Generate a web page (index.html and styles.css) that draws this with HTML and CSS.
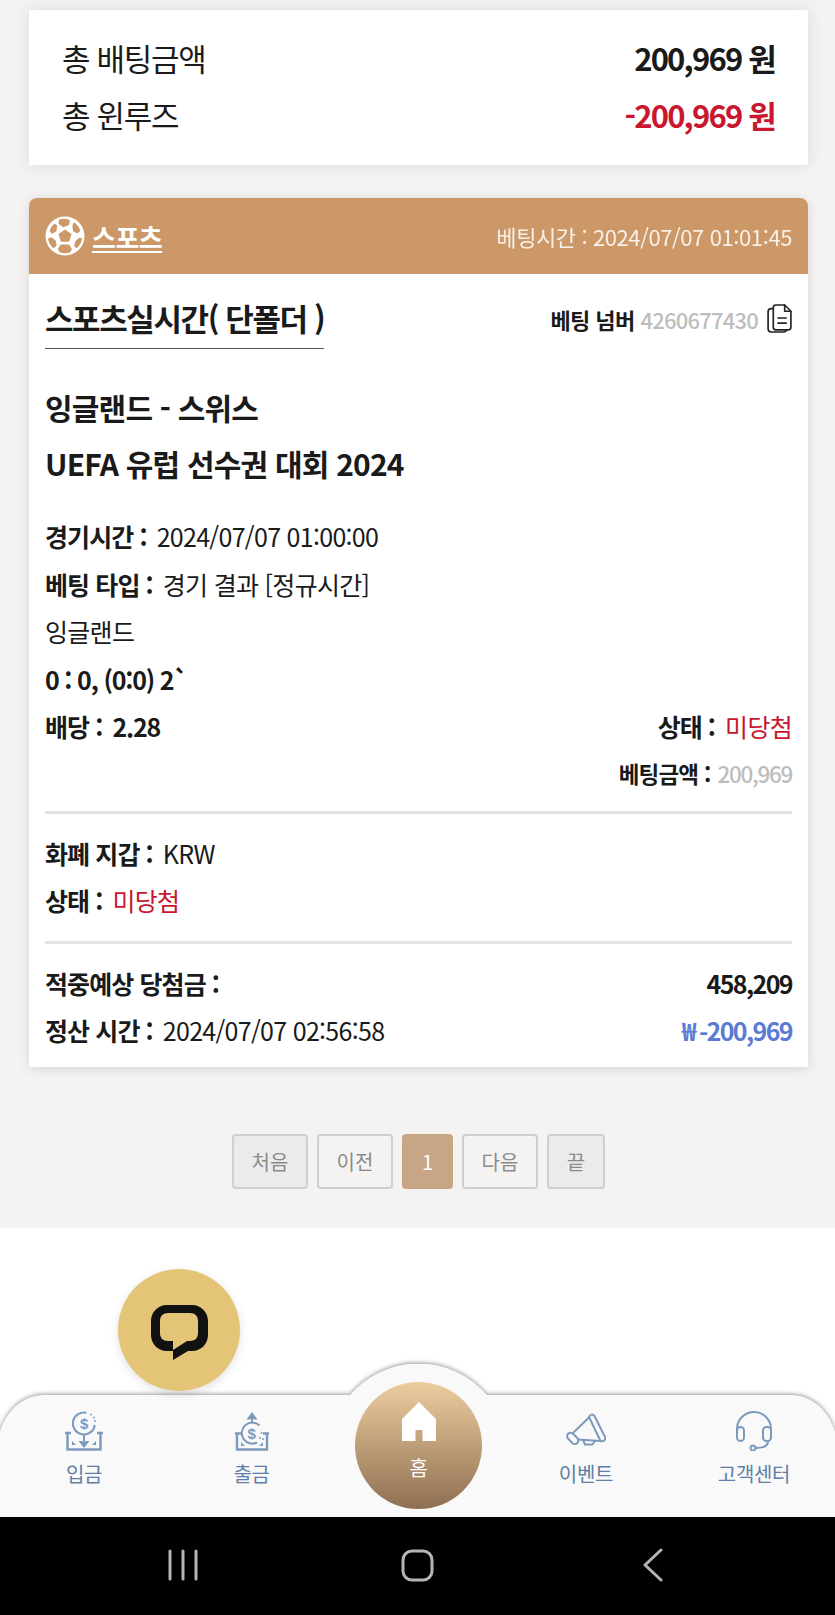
FILE: index.html
```html
<!DOCTYPE html>
<html lang="ko">
<head>
  <meta charset="utf-8">
  <meta name="viewport" content="width=device-width, initial-scale=1.0">
  <title>베팅내역</title>
  <link rel="stylesheet" href="styles.css">
</head>
<body>

  <div class="page">

    <div class="summary">
      <div class="summary-row">
        <span>총 배팅금액</span>
        <b>200,969 원</b>
      </div>
      <div class="summary-row">
        <span>총 윈루즈</span>
        <b class="red">-200,969 원</b>
      </div>
    </div>

    <div class="bet-card">
      <div class="bet-head">
        <div class="bet-sport">
          <svg class="ball" viewBox="0 0 40 40">
            <circle cx="20" cy="20" r="19.5" fill="#fff"/>
            <path fill="#cc9868" d="M20 13.5l6.5 4.6-2.4 7.600h-8.200l-2.400-7.600zM14 3.600c2.600-1 6-1.200 8.600-.4l2.400 1.200-1 4.600-5.600 2.200-4.800-3.200zM29 6.200c3 2 5.400 5.200 6.400 8.600l-3.200 2.600-4.200-2.400-.6-5.600zM4.600 15c.8-3 2.400-5.400 5-7.600l2.600 2-.8 5.800-4.400 2.600zM3 22.600l3.600-1.400 4.200 3.600.8 5-3 2.400C5.400 30 3.600 26.600 3 22.600zM15.600 28.600h8.400l3 4.600-2 3.400c-3 .8-7 .8-10-.2l-2.200-3.400zM37 22c-.4 4-2 7.400-5.200 10.200l-2.600-2 1-5 4-3.400z"/>
          </svg>
          <span>스포츠</span>
        </div>
        <div class="bet-time">베팅시간 : 2024/07/07 01:01:45</div>
      </div>

      <div class="bet-body">
        <div class="bet-top">
          <div class="bet-type">스포츠실시간( 단폴더 )</div>
          <div class="bet-no">
            <b>베팅 넘버</b> <span class="gray">4260677430</span>
            <svg class="copy" viewBox="0 0 24 28" fill="none" stroke="#222" stroke-width="1.6" stroke-linejoin="round" stroke-linecap="round">
              <path d="M6 3.500C6 2 7 1 8.500 1H17l6 6v15.500c0 1.500-1 2.500-2.500 2.500h-12C7 25 6 24 6 22.500z"/>
              <path d="M17 1v6h6"/>
              <path d="M6 4.500H4C2 4.500 1 5.500 1 7.500v16.500C1 26 2 27 4 27h12c1.500 0 2.500-.8 2.800-2"/>
              <path d="M10.500 13.500h8M10.500 18.500h8"/>
            </svg>
          </div>
        </div>

        <div class="match">
          <div>잉글랜드 - 스위스</div>
          <div>UEFA 유럽 선수권 대회 2024</div>
        </div>

        <div class="info">
          <div class="info-row"><div><b>경기시간<i>:</i></b>2024/07/07 01:00:00</div></div>
          <div class="info-row"><div><b>베팅 타입<i>:</i></b>경기 결과 [정규시간]</div></div>
          <div class="info-row"><div>잉글랜드</div></div>
          <div class="info-row"><div class="medium">0 : 0, (0:0) 2`</div></div>
          <div class="info-row">
            <div><b>배당<i>:</i></b><span class="medium">2.28</span></div>
            <div><b>상태<i>:</i></b><span class="red">미당첨</span></div>
          </div>
          <div class="info-row small">
            <div></div>
            <div><b>베팅금액<i>:</i></b><span class="gray">200,969</span></div>
          </div>
        </div>

        <div class="info divided">
          <div class="info-row"><div><b>화폐 지갑<i>:</i></b>KRW</div></div>
          <div class="info-row"><div><b>상태<i>:</i></b><span class="red">미당첨</span></div></div>
        </div>

        <div class="info divided">
          <div class="info-row">
            <div><b>적중예상 당첨금<i>:</i></b></div>
            <div class="medium tight">458,209</div>
          </div>
          <div class="info-row">
            <div><b>정산 시간<i>:</i></b>2024/07/07 02:56:58</div>
            <div class="medium tight blue">₩ -200,969</div>
          </div>
        </div>
      </div>
    </div>

    <div class="paging">
      <a class="page-btn w76 off">처음</a>
      <a class="page-btn w76">이전</a>
      <a class="page-btn w51 on">1</a>
      <a class="page-btn w76">다음</a>
      <a class="page-btn w58 off">끝</a>
    </div>

    <div class="footer">
      <button class="chat-btn">
        <svg viewBox="0 0 57 56">
          <path fill="#111" fill-rule="evenodd" d="M16 0h25c9 0 16 7 16 16v14c0 9-7 16-16 16h-4L22 55V46h-6C7 46 0 39 0 30V16C0 7 7 0 16 0zM17 8c-5 0-8 3-8 8v12c0 5 3 8 8 8h5v9l14-9h3c5 0 8-3 8-8V16c0-5-3-8-8-8z"/>
        </svg>
      </button>

      <div class="tabbar">
        <svg class="tabbar-bg" viewBox="0 0 835 153">
          <path d="M0 153V68C6 46 24 31 44 31H350A90 90 0 0 1 487 31H791C811 31 829 46 835 68V153Z"/>
        </svg>

        <div class="tab">
          <svg class="tab-icon" viewBox="0 0 40 40" fill="none" stroke="#7d9abd" stroke-width="2">
            <path d="M22.500 1.800A11 11 0 1 0 30.800 14"/>
            <circle cx="27" cy="3.600" r="1" fill="#7d9abd" stroke="none"/>
            <circle cx="30" cy="6.500" r="1" fill="#7d9abd" stroke="none"/>
            <circle cx="31" cy="10" r="1" fill="#7d9abd" stroke="none"/>
            <text x="20" y="18" text-anchor="middle" class="dollar">$</text>
            <path d="M20 23V35"/>
            <path d="M14.500 30L20 37l5.500-7H22l-2 2-2-2z" fill="#7d9abd" stroke="none"/>
            <path d="M1 22H7M3.500 22V38.500H36.500V22M33 22H39" stroke-width="2.400"/>
            <path d="M8 30v4h4zM32 30v4h-4z" fill="#7d9abd" stroke="none"/>
          </svg>
          <span>입금</span>
        </div>

        <div class="tab">
          <svg class="tab-icon" viewBox="0 0 40 40" fill="none" stroke="#7d9abd" stroke-width="2">
            <path d="M20 5V12"/>
            <path d="M14.500 8.500L20 1l5.500 7.500H22l-2-2-2 2z" fill="#7d9abd" stroke="none"/>
            <path d="M27.500 14.500A10.500 10.500 0 1 0 25 31.500"/>
            <circle cx="29.500" cy="22" r="1" fill="#7d9abd" stroke="none"/>
            <circle cx="28" cy="27" r="1" fill="#7d9abd" stroke="none"/>
            <circle cx="31" cy="28" r="1" fill="#7d9abd" stroke="none"/>
            <text x="19.500" y="27.500" text-anchor="middle" class="dollar">$</text>
            <path d="M3 22.500H9M5 22.500V38.500H35V22.500M31 22.500H37" stroke-width="2.400"/>
            <path d="M9 31v4h4zM31 31v4h-4z" fill="#7d9abd" stroke="none"/>
          </svg>
          <span>출금</span>
        </div>

        <div class="tab tab-home">
          <svg class="home-icon" viewBox="0 0 34 39">
            <path fill="#fff" d="M17 0L34 17V39H20.500V28H13.500V39H0V17z"/>
          </svg>
          <span>홈</span>
        </div>

        <div class="tab">
          <svg class="tab-icon" viewBox="0 0 40 40" fill="none" stroke="#7d9abd" stroke-width="2" stroke-linejoin="round" stroke-linecap="round">
            <path d="M23 6C24 3 27 3 28.500 5L39 26c1 3-2 5-4.500 4z"/>
            <path d="M23.500 6L8 21M34.500 30L12 28.500"/>
            <rect x="1" y="23" width="13" height="7" rx="3.500" transform="rotate(45 6 26)"/>
            <path d="M17 29l2 4.500h7.500l2.500-3.500"/>
          </svg>
          <span>이벤트</span>
        </div>

        <div class="tab">
          <svg class="tab-icon" viewBox="0 0 40 40" fill="none" stroke="#7d9abd" stroke-width="2" stroke-linecap="round">
            <path d="M3 23V18A17 17 0 0 1 37 18V23"/>
            <rect x="3" y="16" width="7" height="14" rx="3.500"/>
            <rect x="29" y="16" width="8" height="14" rx="3.500"/>
            <path d="M34 30c0 5-5 7-12 7"/>
            <circle cx="19" cy="37" r="2.500"/>
          </svg>
          <span>고객센터</span>
        </div>
      </div>
    </div>

    <div class="softkeys">
      <div class="softkey">
        <svg width="32" height="32" viewBox="0 0 32 32" stroke="#b5b5b5" stroke-width="3" stroke-linecap="round">
          <path d="M3 2V30M16 2V30M29 2V30"/>
        </svg>
      </div>
      <div class="softkey">
        <svg width="34" height="34" viewBox="0 0 34 34" fill="none" stroke="#b5b5b5" stroke-width="3">
          <rect x="2" y="3" width="29" height="29" rx="9"/>
        </svg>
      </div>
      <div class="softkey">
        <svg width="20" height="34" viewBox="0 0 20 34" fill="none" stroke="#b5b5b5" stroke-width="3" stroke-linecap="round" stroke-linejoin="round">
          <path d="M18 2L2 17L18 32"/>
        </svg>
      </div>
    </div>

  </div>

</body>
</html>
```

FILE: styles.css
```css
* {
  box-sizing: border-box;
}

body {
  margin: 0;
  font-family: "Noto Sans CJK KR", "Noto Sans", sans-serif;
  color: #1a1a1a;
  background-color: #f4f3f2;
}

b {
  font-weight: 700;
}

.page {
  width: 835px;
  height: 1615px;
  overflow: hidden;
  display: flex;
  flex-direction: column;
}

.red {
  color: #c8172e;
}

.gray {
  color: #bdbdbd;
}

.blue {
  color: #5a7bd2;
}

.medium {
  font-weight: 700;
  letter-spacing: -1.2px;
}

.tight {
  letter-spacing: -1.6px;
}

/* 상단 합계 */
.summary {
  margin: 10px 27px 0 29px;
  height: 155px;
  padding: 19px 33px 0;
  background-color: #fff;
  box-shadow: 0 0 16px rgba(0, 0, 0, 0.1);
}

.summary-row {
  display: flex;
  justify-content: space-between;
  height: 57px;
  line-height: 57px;
  font-size: 31px;
  letter-spacing: -1.3px;
}

.summary-row b {
  letter-spacing: -1.8px;
}

/* 베팅 카드 */
.bet-card {
  margin: 33px 27px 0 29px;
  height: 869px;
  background-color: #fff;
  border-radius: 8px 8px 0 0;
  box-shadow: 0 2px 12px rgba(0, 0, 0, 0.12);
}

.bet-head {
  display: flex;
  justify-content: space-between;
  align-items: center;
  height: 76px;
  padding: 0 16px;
  background-color: #cc9868;
  border-radius: 8px 8px 0 0;
  color: #fff;
}

.bet-sport {
  display: flex;
  align-items: center;
  gap: 7px;
  font-size: 26px;
  font-weight: 700;
  letter-spacing: -0.5px;
}

.bet-sport span {
  text-decoration: underline;
  text-underline-offset: 3px;
}

.ball {
  width: 40px;
  height: 40px;
}

.bet-time {
  font-size: 22px;
  letter-spacing: -0.4px;
  opacity: 0.85;
}

.bet-body {
  padding: 0 16px;
}

.bet-top {
  display: flex;
  justify-content: space-between;
  align-items: center;
  height: 75px;
}

.bet-type {
  height: 75px;
  line-height: 88px;
  font-size: 31px;
  font-weight: 700;
  letter-spacing: -1.4px;
  border-bottom: 1px solid #555;
}

.bet-no {
  display: flex;
  align-items: center;
  gap: 6px;
  padding-top: 14px;
  font-size: 22px;
  letter-spacing: -0.6px;
}

.bet-no .gray {
  font-weight: 500;
  letter-spacing: -0.8px;
}

.copy {
  width: 25px;
  height: 29px;
  margin-left: 3px;
}

.match {
  margin-top: 30px;
  line-height: 56px;
  font-size: 30px;
  font-weight: 700;
  letter-spacing: -0.8px;
}

.info {
  margin-top: 22px;
  font-size: 25px;
  letter-spacing: -0.7px;
}

.info b {
  letter-spacing: -0.9px;
}

.info i {
  font-style: normal;
  margin: 0 10px 0 6px;
}

.info-row {
  display: flex;
  justify-content: space-between;
  height: 47.5px;
  line-height: 47.5px;
}

.info-row.small {
  height: 45px;
  line-height: 45px;
  font-size: 22.5px;
}

.info-row.small i {
  margin: 0 7px 0 6px;
}

.info-row.small .gray {
  font-weight: 500;
  letter-spacing: -1.3px;
}

.divided {
  margin-top: 15px;
  padding-top: 16px;
  border-top: 3px solid #e2e2e2;
}

.divided + .divided {
  margin-top: 16px;
}

/* 페이징 */
.paging {
  display: flex;
  justify-content: center;
  gap: 9px;
  height: 161px;
  padding-top: 67px;
  padding-left: 2px;
}

.page-btn {
  height: 55px;
  line-height: 51px;
  text-align: center;
  font-size: 20px;
  color: #8a8a8a;
  border: 2px solid #cfcfcf;
  border-radius: 4px;
}

.w76 {
  width: 76px;
}

.w51 {
  width: 51px;
}

.w58 {
  width: 58px;
}

.off {
  background-color: #ebebeb;
}

.on {
  background-color: #c8a585;
  border-color: #c8a585;
  color: #fff;
}

/* 하단 영역 */
.footer {
  position: relative;
  height: 289px;
  padding-top: 167px;
  background-color: #fff;
}

.chat-btn {
  position: absolute;
  left: 118px;
  top: 41px;
  z-index: 2;
  width: 122px;
  height: 122px;
  padding: 0;
  border: none;
  border-radius: 50%;
  background-color: #e4c577;
  box-shadow: 0 3px 10px rgba(0, 0, 0, 0.12);
  display: flex;
  justify-content: center;
  align-items: center;
}

.chat-btn svg {
  width: 57px;
  height: 56px;
  margin-top: 6px;
}

.tabbar {
  position: relative;
  display: grid;
  grid-template-columns: 168px 167px 167px 168px 168px;
  height: 122px;
}

.tabbar-bg {
  position: absolute;
  left: 0;
  top: -31px;
  width: 835px;
  height: 153px;
  fill: #f9f9f9;
  filter: drop-shadow(0 -1px 2px rgba(0, 0, 0, 0.4));
}

.tab {
  position: relative;
  display: flex;
  flex-direction: column;
  align-items: center;
  padding-top: 16px;
  font-size: 20px;
  line-height: 30px;
  letter-spacing: -0.3px;
  color: #5f7fa6;
}

.tab-icon {
  width: 40px;
  height: 40px;
  margin-bottom: 8px;
}

.dollar {
  font-family: "Liberation Sans", sans-serif;
  font-size: 15px;
  font-weight: 700;
  fill: #7d9abd;
  stroke: none;
}

.tab-home {
  justify-self: center;
  width: 127px;
  height: 127px;
  margin-top: -13px;
  padding-top: 20px;
  border-radius: 50%;
  background: linear-gradient(#eccd9f, #8f6f52);
  color: #fff;
}

.home-icon {
  width: 34px;
  height: 39px;
  margin-bottom: 12px;
}

/* 안드로이드 내비게이션 */
.softkeys {
  display: grid;
  grid-template-columns: repeat(3, 235px);
  justify-content: center;
  align-items: center;
  height: 98px;
  padding-bottom: 2px;
  background-color: #000;
}

.softkey {
  display: flex;
  justify-content: center;
}
```
